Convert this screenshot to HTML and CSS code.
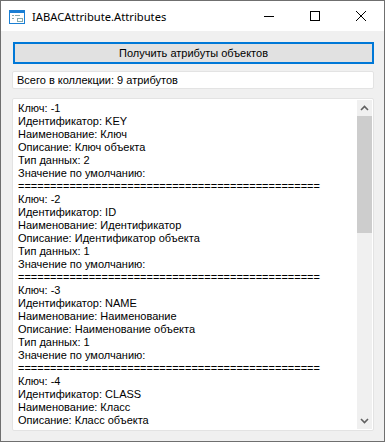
FILE: index.html
```html
<!DOCTYPE html>
<html lang="ru">
<head>
  <meta charset="UTF-8" />
  <title>IABACAttribute.Attributes</title>
  <link rel="stylesheet" href="styles.css">
</head>
<body>
  <div class="window">
    <div class="titlebar">
      <svg class="app-icon" width="16" height="14" viewBox="0 0 16 14">
        <rect x="0.5" y="0.5" width="15" height="13" fill="#fff" stroke="#1a7fd4"/>
        <rect x="0" y="0" width="16" height="3" fill="#1a7fd4"/>
        <rect x="3" y="5" width="2" height="1" fill="#8aa"/>
        <rect x="6" y="5" width="5" height="1" fill="#8aa"/>
        <rect x="3" y="8" width="2" height="1" fill="#8aa"/>
        <rect x="8.5" y="8.5" width="5" height="3" fill="none" stroke="#8aa"/>
      </svg>
      <span class="title">IABACAttribute.Attributes</span>
      <div class="controls">
        <span class="ctl">
          <svg width="10" height="10" viewBox="0 0 10 10"><path d="M0 5.5H10" stroke="#000" stroke-width="1"/></svg>
        </span>
        <span class="ctl">
          <svg width="10" height="10" viewBox="0 0 10 10"><rect x="0.5" y="0.5" width="9" height="9" fill="none" stroke="#000"/></svg>
        </span>
        <span class="ctl">
          <svg width="10" height="10" viewBox="0 0 10 10"><path d="M0 0L10 10M10 0L0 10" stroke="#000" stroke-width="1"/></svg>
        </span>
      </div>
    </div>
    <div class="client">
      <button class="get-btn" type="button">Получить атрибуты объектов</button>
      <div class="count-box">Всего в коллекции: 9 атрибутов</div>
      <div class="memo">
        <div class="memo-text">Ключ: -1
Идентификатор: KEY
Наименование: Ключ
Описание: Ключ объекта
Тип данных: 2
Значение по умолчанию:
===============================================
Ключ: -2
Идентификатор: ID
Наименование: Идентификатор
Описание: Идентификатор объекта
Тип данных: 1
Значение по умолчанию:
===============================================
Ключ: -3
Идентификатор: NAME
Наименование: Наименование
Описание: Наименование объекта
Тип данных: 1
Значение по умолчанию:
===============================================
Ключ: -4
Идентификатор: CLASS
Наименование: Класс
Описание: Класс объекта</div>
        <div class="scrollbar">
          <div class="sb-btn">
            <svg width="9" height="6" viewBox="0 0 9 6"><path d="M1 5L4.5 1.5L8 5" fill="none" stroke="#606060" stroke-width="1.6"/></svg>
          </div>
          <div class="sb-thumb"></div>
          <div class="sb-track"></div>
          <div class="sb-btn">
            <svg width="9" height="6" viewBox="0 0 9 6"><path d="M1 1L4.5 4.5L8 1" fill="none" stroke="#606060" stroke-width="1.6"/></svg>
          </div>
        </div>
      </div>
    </div>
  </div>
</body>
</html>
```

FILE: styles.css
```css
body { margin: 0; background: #fff; font-family: 'Liberation Sans', Arial, sans-serif; }

.window {
  width: 385px; height: 442px;
  box-sizing: border-box;
  border: 1px solid #6f6f6f;
  display: flex; flex-direction: column;
  background: #f0f0f0;
}

.titlebar {
  height: 30px; flex: none;
  background: #fff;
  display: flex; align-items: center;
  padding-left: 8px;
}
.app-icon { flex: none; margin-top: 2px; }
.title {
  margin-left: 7px;
  font-family: 'Segoe UI', 'Noto Sans', sans-serif;
  font-size: 11.2px;
  color: #000;
}
.controls { margin-left: auto; display: flex; height: 100%; }
.ctl {
  width: 46px; height: 100%;
  display: flex; align-items: center; justify-content: center;
}

.client {
  flex: 1;
  padding: 11px 10px 10px 11px;
  display: flex; flex-direction: column;
  min-height: 0;
}

.get-btn {
  margin: 0 0 0 1px;
  height: 22px;
  background: #e1e1e1;
  border: 2px solid #0078d7;
  font-family: 'Liberation Sans', Arial, sans-serif;
  font-size: 11px;
  color: #000;
  padding: 0;
}

.count-box {
  margin-top: 7px;
  height: 18px;
  box-sizing: border-box;
  background: #fff;
  border: 1px solid #e3e3e3;
  border-radius: 2px;
  padding: 2px 0 0 4px;
  font-size: 11px;
  line-height: 13px;
  color: #000;
}

.memo {
  margin-top: 9px;
  flex: 1; min-height: 0;
  background: #fff;
  border: 1px solid #e3e3e3;
  border-radius: 2px;
  display: flex;
  padding: 1px 1px 1px 0;
}
.memo-text {
  flex: 1;
  overflow: hidden;
  white-space: pre-line;
  padding: 2px 0 0 5px;
  font-size: 11px;
  line-height: 13px;
  color: #000;
}

.scrollbar {
  width: 15px; flex: none;
  display: flex; flex-direction: column;
  background: #f0f0f0;
}
.sb-btn {
  height: 16px; flex: none;
  display: flex; align-items: center; justify-content: center;
}
.sb-thumb { height: 117px; flex: none; background: #cdcdcd; }
.sb-track { flex: 1; }
```
